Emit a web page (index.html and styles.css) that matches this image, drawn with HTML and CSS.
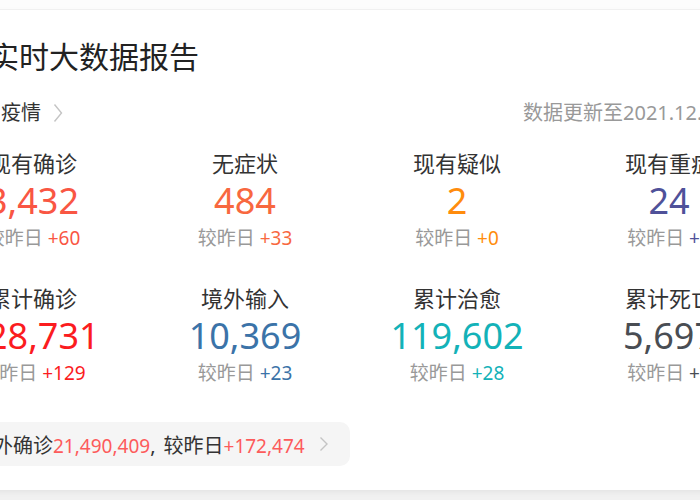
FILE: index.html
```html
<!DOCTYPE html>
<html lang="zh-CN">
<head>
<meta charset="utf-8">
<title>疫情实时大数据报告</title>
<link rel="stylesheet" href="styles.css">
</head>
<body>
<div class="topstrip"></div>
<section class="card">
  <h1 class="title">疫情实时大数据报告</h1>
  <div class="subrow">
    <div class="sub">
      <span class="sub-text">疫情</span>
      <svg class="chev" width="10" height="20" viewBox="0 0 10 20"><polyline points="1.5,1.5 8.5,10 1.5,18.5" fill="none" stroke="#c4c4c4" stroke-width="1.4"/></svg>
    </div>
    <div class="updated">数据更新至2021.12.09 10:00</div>
  </div>
  <div class="grid">
    <div class="cell"><div class="label">现有确诊</div><div class="num c-red">3,432</div><div class="delta">较昨日 <span class="c-red">+60</span></div></div>
    <div class="cell"><div class="label">无症状</div><div class="num c-orange-red">484</div><div class="delta">较昨日 <span class="c-orange-red">+33</span></div></div>
    <div class="cell"><div class="label">现有疑似</div><div class="num c-orange">2</div><div class="delta">较昨日 <span class="c-orange">+0</span></div></div>
    <div class="cell"><div class="label">现有重症</div><div class="num c-purple">24</div><div class="delta">较昨日 <span class="c-purple">+1</span></div></div>
    <div class="cell"><div class="label">累计确诊</div><div class="num c-bright">128,731</div><div class="delta">较昨日 <span class="c-bright">+129</span></div></div>
    <div class="cell"><div class="label">境外输入</div><div class="num c-blue">10,369</div><div class="delta">较昨日 <span class="c-blue">+23</span></div></div>
    <div class="cell"><div class="label">累计治愈</div><div class="num c-teal">119,602</div><div class="delta">较昨日 <span class="c-teal">+28</span></div></div>
    <div class="cell"><div class="label">累计死亡</div><div class="num c-dark">5,697</div><div class="delta">较昨日 <span class="c-dark">+0</span></div></div>
  </div>
  <div class="bar">
    <span>海外确诊<span class="bar-num">21,490,409</span><span class="comma">,</span>较昨日<span class="bar-num">+172,474</span></span>
    <svg class="chev-sm" width="10" height="16" viewBox="0 0 10 16"><polyline points="1.5,1.5 8,8 1.5,14.5" fill="none" stroke="#c4c4c4" stroke-width="1.4"/></svg>
  </div>
</section>
</body>
</html>
```
FILE: styles.css
```css
html, body {
  margin: 0;
  padding: 0;
}
body {
  width: 700px;
  height: 500px;
  overflow: hidden;
  background: #f1f1f1;
  font-family: "Noto Sans", "Noto Sans CJK SC", sans-serif;
  color: #333;
}
.topstrip {
  height: 10px;
  background: #fcfcfc;
  border-bottom: 1px solid #f3f3f3;
  box-sizing: border-box;
}
.card {
  margin-left: -73px;
  width: 900px;
  height: 480px;
  box-sizing: border-box;
  background: #fff;
  padding-top: 27px;
  box-shadow: 0 2px 6px rgba(0, 0, 0, 0.06);
}
.title {
  margin: 0;
  font-size: 30px;
  line-height: 40px;
  font-weight: normal;
  color: #222;
  padding-left: 2px;
}
.subrow {
  margin-top: 22px;
  display: grid;
  grid-template-columns: 596px auto;
  height: 28px;
  align-items: center;
}
.sub {
  display: flex;
  align-items: center;
  padding-left: 74px;
  font-size: 20px;
  line-height: 28px;
  color: #333;
}
.chev {
  margin-left: 12px;
}
.updated {
  font-size: 20px;
  line-height: 28px;
  color: #999;
  white-space: nowrap;
}
.grid {
  margin-top: 21px;
  display: grid;
  grid-template-columns: repeat(4, 212px);
  row-gap: 32px;
}
.cell {
  text-align: center;
  white-space: nowrap;
}
.label {
  font-size: 22px;
  line-height: 30px;
  color: #333;
}
.num {
  margin-top: 3px;
  font-size: 36px;
  line-height: 40px;
}
.delta {
  margin-top: 4px;
  font-size: 19px;
  line-height: 26px;
  color: #999;
}
.c-red { color: #f95643; }
.c-orange-red { color: #f8683f; }
.c-orange { color: #ff8c0d; }
.c-purple { color: #4f5199; }
.c-bright { color: #fb1c1f; }
.c-blue { color: #3b73a8; }
.c-teal { color: #13b2b8; }
.c-dark { color: #494d53; }
.bar {
  margin-top: 36px;
  margin-left: 32px;
  width: 391px;
  height: 44px;
  box-sizing: border-box;
  padding-left: 14px;
  display: flex;
  align-items: center;
  background: #f5f5f5;
  border-radius: 10px;
  font-size: 20px;
  color: #333;
  white-space: nowrap;
}
.bar-num {
  color: #fd5b5b;
  font-size: 19px;
}
.comma {
  margin-right: 8px;
}
.chev-sm {
  margin-left: 14px;
}
```
